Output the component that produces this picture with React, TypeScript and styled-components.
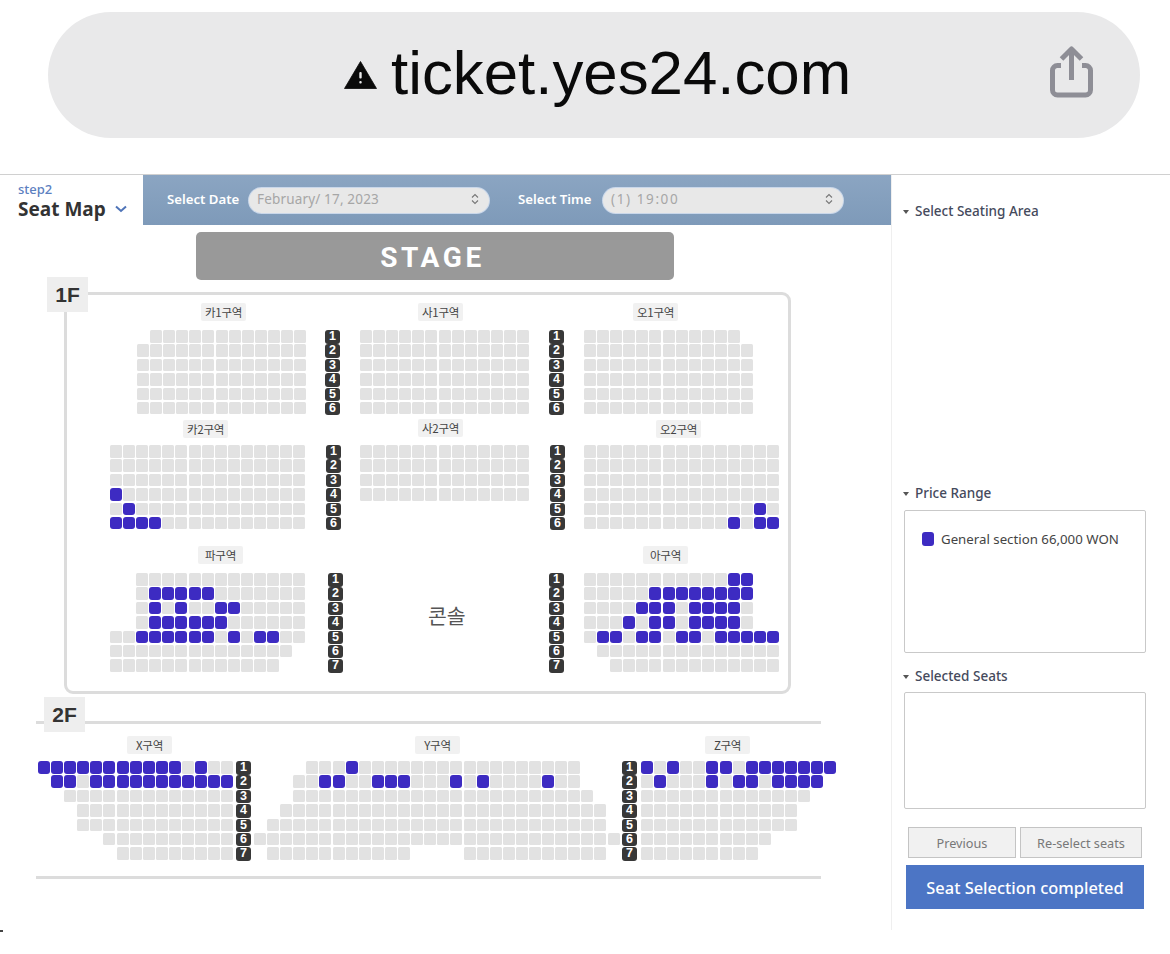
import React from "react";
import styled, { createGlobalStyle } from "styled-components";

const Global = createGlobalStyle`
  html, body { margin: 0; padding: 0; background: #fff; }
  body { font-family: "Noto Sans", "Noto Sans CJK KR", sans-serif; }
  #root { width: 1170px; height: 954px; overflow: hidden; }
`;

const Page = styled.div`
  width: 1170px;
  height: 954px;
  background: #fff;
  display: flex;
  flex-direction: column;
`;

/* ---------- Safari address bar ---------- */
const BrowserArea = styled.header`
  height: 175px;
  padding: 12px 30px 0 48px;
  box-sizing: border-box;
  border-bottom: 1px solid #d0d0d0;
  flex: none;
`;
const UrlPill = styled.div`
  height: 126px;
  border-radius: 63px;
  background: #e9e9ea;
  display: flex;
  align-items: center;
  padding: 0 47px 0 296px;
`;
const UrlText = styled.span`
  font-family: "Liberation Sans", Arial, sans-serif;
  font-size: 61.8px;
  line-height: 72px;
  color: #0a0a0a;
  margin-left: 14px;
  margin-top: -4px;
`;
const ShareWrap = styled.div`
  margin-left: auto;
  display: flex;
  margin-top: -8px;
`;

/* ---------- Body ---------- */
const Body = styled.div`
  display: flex;
  height: 755px;
  flex: none;
`;
const Main = styled.main`
  width: 891px;
  flex: none;
  display: flex;
  flex-direction: column;
`;
const TopBar = styled.div`
  display: flex;
  height: 50px;
  flex: none;
`;
const StepBox = styled.div`
  width: 143px;
  flex: none;
  box-sizing: border-box;
  padding: 6px 0 0 18px;
`;
const StepLabel = styled.div`
  font-size: 13px;
  line-height: 16px;
  color: #5c80bf;
  font-weight: 500;
`;
const StepTitle = styled.div`
  display: flex;
  align-items: center;
  gap: 9px;
  font-size: 19px;
  line-height: 24px;
  font-weight: 700;
  color: #333;
`;
const FilterBar = styled.div`
  flex: 1;
  display: flex;
  align-items: center;
  background: linear-gradient(#8ba5c2, #7e9ab9);
  padding: 0 0 0 24px;
`;
const FilterLabel = styled.span<{ $w: number }>`
  font-size: 13.2px;
  font-weight: 600;
  color: #fff;
  white-space: nowrap;
  width: ${(p) => p.$w}px;
  margin-bottom: 3px;
  flex: none;
`;
const FilterSelect = styled.div<{ $gap: number; $spacing: number }>`
  width: 240px;
  height: 25px;
  box-sizing: border-box;
  border-radius: 13px;
  background: #e8e8e8;
  box-shadow: 0 0 0 1px #c9d7ea;
  display: flex;
  align-items: center;
  justify-content: space-between;
  padding: 0 8px 2px 8px;
  margin-right: ${(p) => p.$gap}px;
  font-size: 13.5px;
  letter-spacing: ${(p) => p.$spacing}px;
  color: #a6a6a6;
  flex: none;
`;
const Canvas = styled.div`
  position: relative;
  flex: 1;
  display: flex;
  flex-direction: column;
`;
const Stage = styled.div`
  width: 478px;
  height: 48px;
  margin: 7px 0 0 196px;
  background: #999;
  border-radius: 5px;
  color: #fff;
  font-family: Roboto, "Liberation Sans", sans-serif;
  font-weight: 700;
  font-size: 28px;
  letter-spacing: 3.6px;
  display: flex;
  align-items: center;
  justify-content: center;
  padding: 2px 5px 0 0;
  box-sizing: border-box;
  flex: none;
`;
const Hall = styled.div`
  width: 727px;
  height: 402px;
  box-sizing: border-box;
  margin: 12px 0 0 64px;
  border: 3px solid #dcdcdc;
  border-radius: 9px;
  flex: none;
`;
const Rule = styled.div<{ $top: number }>`
  width: 785px;
  height: 3px;
  background: #dcdcdc;
  margin: ${(p) => p.$top}px 0 0 36px;
  flex: none;
`;
const FloorTag = styled.div<{ $x: number; $y: number }>`
  position: absolute;
  left: ${(p) => p.$x}px;
  top: ${(p) => p.$y}px;
  width: 41px;
  height: 35px;
  background: #eee;
  color: #333;
  font-family: "Liberation Sans", Arial, sans-serif;
  font-weight: 700;
  font-size: 21px;
  display: flex;
  align-items: center;
  justify-content: center;
`;
const ZoneTag = styled.div<{ $x: number; $y: number }>`
  position: absolute;
  left: ${(p) => p.$x}px;
  top: ${(p) => p.$y}px;
  width: 45px;
  height: 18px;
  background: #f1f1f1;
  border-radius: 2px;
  color: #444;
  font-family: "Noto Sans CJK KR", "Noto Sans", sans-serif;
  font-size: 11.5px;
  line-height: 18px;
  text-align: center;
  letter-spacing: -0.3px;
`;
const Console = styled.div`
  position: absolute;
  left: 428px;
  top: 376px;
  font-family: "Noto Sans CJK KR", sans-serif;
  font-size: 20.5px;
  line-height: 28px;
  color: #555;
`;
const SeatBlock = styled.div<{ $x: number; $y: number; $cols: number }>`
  position: absolute;
  left: ${(p) => p.$x}px;
  top: ${(p) => p.$y}px;
  display: grid;
  grid-template-columns: repeat(${(p) => p.$cols}, 13.1px);
  grid-auto-rows: 14.4px;
`;
const Seat = styled.div<{ $on?: boolean }>`
  width: 12px;
  height: 12.5px;
  border-radius: ${(p) => (p.$on ? "3px" : "1.5px")};
  background: ${(p) => (p.$on ? "#3d2bc2" : "#e2e2e2")};
`;
const SeatGap = styled.div``;
const RowNumbers = styled.div<{ $x: number; $y: number }>`
  position: absolute;
  left: ${(p) => p.$x}px;
  top: ${(p) => p.$y}px;
  display: grid;
  grid-auto-rows: 14.4px;
`;
const RowBadge = styled.div`
  width: 15px;
  height: 13.5px;
  border-radius: 3px;
  background: #383838;
  color: #fff;
  font-family: "Liberation Sans", Arial, sans-serif;
  font-weight: 700;
  font-size: 12.5px;
  line-height: 13.5px;
  text-align: center;
`;
const CornerMark = styled.div`
  position: absolute;
  left: 0;
  top: 705px;
  width: 3px;
  height: 2px;
  background: #444;
`;

/* ---------- Sidebar ---------- */
const Sidebar = styled.aside`
  flex: 1;
  box-sizing: border-box;
  border-left: 1px solid #efefef;
  padding: 27px 0 0 11px;
  display: flex;
  flex-direction: column;
`;
const Heading = styled.div<{ $top?: number }>`
  display: flex;
  align-items: center;
  gap: 6px;
  height: 18px;
  margin-top: ${(p) => p.$top ?? 0}px;
  font-size: 13.5px;
  font-weight: 500;
  color: #454a5c;
  white-space: nowrap;
  &::before {
    content: "";
    width: 0;
    height: 0;
    border-left: 3.5px solid transparent;
    border-right: 3.5px solid transparent;
    border-top: 4px solid #555;
    margin-top: 1px;
  }
`;
const InfoBox = styled.div<{ $h: number; $top: number }>`
  width: 242px;
  height: ${(p) => p.$h}px;
  margin: ${(p) => p.$top}px 0 0 1px;
  box-sizing: border-box;
  border: 1px solid #c9c9c9;
  border-radius: 2px;
  padding: 19px 0 0 17px;
  flex: none;
`;
const Legend = styled.div`
  display: flex;
  align-items: center;
  gap: 7px;
  font-size: 13.25px;
  line-height: 18px;
  color: #444;
  white-space: nowrap;
`;
const LegendSeat = styled.div`
  width: 12px;
  height: 14px;
  border-radius: 3px;
  background: #3d2bc2;
`;
const ButtonRow = styled.div`
  display: flex;
  gap: 4px;
  margin: 18px 0 0 5px;
`;
const GhostButton = styled.button<{ $w: number }>`
  width: ${(p) => p.$w}px;
  height: 31px;
  box-sizing: border-box;
  border: 1px solid #c4c4c4;
  background: #f1f1f1;
  color: #787878;
  font-family: inherit;
  font-size: 12.7px;
  padding: 0;
`;
const PrimaryButton = styled.button`
  width: 238px;
  height: 44px;
  margin: 7px 0 0 3px;
  border: none;
  background: #4c75c5;
  color: #fff;
  font-family: inherit;
  font-size: 16.4px;
  font-weight: 500;
  padding: 0;
`;

/* ---------- Data ---------- */
const ORIGIN_Y = 225;
type Row = [number, number, number[]?, [number, number]?];

const fullRows = (n: number, a: number, b: number): Row[] =>
  Array.from({ length: n }, () => [a, b] as Row);

const blocks: { x: number; y: number; cols: number; rows: Row[] }[] = [
  // 카1
  { x: 137, y: 330, cols: 13, rows: [[1, 12], ...fullRows(5, 0, 12)] },
  // 사1
  { x: 360, y: 330, cols: 13, rows: fullRows(6, 0, 12) },
  // 오1
  { x: 584, y: 330, cols: 13, rows: [[0, 11], ...fullRows(5, 0, 12)] },
  // 카2
  {
    x: 110, y: 445, cols: 15,
    rows: [[0, 14], [0, 14], [0, 14], [0, 14, [0]], [0, 14, [1]], [0, 14, [0, 1, 2, 3]]],
  },
  // 사2
  { x: 360, y: 445, cols: 13, rows: fullRows(4, 0, 12) },
  // 오2
  {
    x: 584, y: 445, cols: 15,
    rows: [[0, 14], [0, 14], [0, 14], [0, 14], [0, 14, [13]], [0, 14, [11, 13, 14]]],
  },
  // 파
  {
    x: 110, y: 573, cols: 15,
    rows: [
      [2, 14],
      [2, 14, [3, 4, 5, 6, 7]],
      [2, 14, [3, 5, 8, 9]],
      [2, 14, [3, 4, 5, 6, 7, 8]],
      [0, 14, [2, 3, 4, 5, 6, 7, 9, 11, 12]],
      [0, 13],
      [0, 12],
    ],
  },
  // 아
  {
    x: 584, y: 573, cols: 15,
    rows: [
      [0, 12, [11, 12]],
      [0, 12, [5, 6, 7, 8, 9, 10, 11, 12]],
      [0, 12, [4, 5, 6, 8, 9, 10, 11]],
      [0, 12, [3, 5, 6, 8, 9, 10, 11]],
      [0, 14, [1, 2, 4, 5, 7, 8, 10, 11, 12, 13, 14]],
      [1, 14],
      [2, 14],
    ],
  },
  // X
  {
    x: 38, y: 761, cols: 15,
    rows: [
      [0, 14, [0, 1, 2, 3, 4, 5, 6, 7, 8, 9, 10, 12]],
      [1, 14, [1, 2, 4, 5, 6, 7, 8, 9, 10, 11, 12, 13, 14]],
      [2, 14],
      [3, 14],
      [3, 14],
      [5, 14],
      [6, 14],
    ],
  },
  // Y
  {
    x: 254, y: 761, cols: 28,
    rows: [
      [4, 24, [7]],
      [3, 24, [5, 6, 9, 10, 11, 15, 17, 22]],
      [3, 25],
      [2, 26],
      [1, 26],
      [0, 27],
      [1, 26, [], [12, 15]],
    ],
  },
  // Z
  {
    x: 641, y: 761, cols: 15,
    rows: [
      [0, 14, [0, 2, 5, 6, 8, 9, 10, 11, 12, 13, 14]],
      [0, 13, [1, 5, 7, 8, 10, 11, 12, 13]],
      [0, 12],
      [0, 11],
      [0, 11],
      [0, 9],
      [0, 8],
    ],
  },
];

const rowColumns: { x: number; y: number; n: number }[] = [
  { x: 325, y: 330, n: 6 },
  { x: 549, y: 330, n: 6 },
  { x: 326, y: 445, n: 6 },
  { x: 550, y: 445, n: 6 },
  { x: 328, y: 573, n: 7 },
  { x: 549, y: 573, n: 7 },
  { x: 236, y: 761, n: 7 },
  { x: 622, y: 761, n: 7 },
];

const zones: { t: string; x: number; y: number }[] = [
  { t: "카1구역", x: 201, y: 303 },
  { t: "사1구역", x: 418, y: 303 },
  { t: "오1구역", x: 633, y: 303 },
  { t: "카2구역", x: 183, y: 420 },
  { t: "사2구역", x: 418, y: 419 },
  { t: "오2구역", x: 656, y: 420 },
  { t: "파구역", x: 198, y: 546 },
  { t: "아구역", x: 643, y: 546 },
  { t: "X구역", x: 127, y: 736 },
  { t: "Y구역", x: 415, y: 736 },
  { t: "Z구역", x: 705, y: 736 },
];

/* ---------- Icons ---------- */
const WarningIcon = () => (
  <svg width="33" height="28" viewBox="0 0 33 28" style={{ flex: "none" }}>
    <path d="M16.5 0.5 L32.5 27.5 H0.5 Z" fill="#0a0a0a" stroke="#0a0a0a" strokeWidth="0.8" strokeLinejoin="round" />
    <rect x="15.3" y="11" width="2.4" height="6.5" rx="1" fill="#e9e9ea" />
    <rect x="15.3" y="20" width="2.4" height="2.6" rx="1" fill="#e9e9ea" />
  </svg>
);
const ShareIcon = () => (
  <svg width="43" height="53" viewBox="0 0 43 53" fill="none" stroke="#8e8e96" strokeWidth="5" strokeLinejoin="round">
    <path d="M11 20.5 H7.5 a5 5 0 0 0 -5 5 V45 a5 5 0 0 0 5 5 H35.5 a5 5 0 0 0 5 -5 V25.5 a5 5 0 0 0 -5 -5 H32" />
    <path d="M21.5 35 V4" />
    <path d="M11.5 14 L21.5 4 L31.5 14" />
  </svg>
);
const Chevron = () => (
  <svg width="12" height="8" viewBox="0 0 12 8" fill="none" stroke="#4f74b8" strokeWidth="2">
    <path d="M1 1.5 L6 6 L11 1.5" />
  </svg>
);
const UpDown = () => (
  <svg width="12" height="14" viewBox="0 0 12 14" fill="none" stroke="#777" strokeWidth="1.1">
    <path d="M3 5.5 L6 2.5 L9 5.5" />
    <path d="M3 8.5 L6 11.5 L9 8.5" />
  </svg>
);

export default function App() {
  return (
    <Page>
      <Global />
      <BrowserArea>
        <UrlPill>
          <WarningIcon />
          <UrlText>ticket.yes24.com</UrlText>
          <ShareWrap>
            <ShareIcon />
          </ShareWrap>
        </UrlPill>
      </BrowserArea>
      <Body>
        <Main>
          <TopBar>
            <StepBox>
              <StepLabel>step2</StepLabel>
              <StepTitle>
                Seat Map <Chevron />
              </StepTitle>
            </StepBox>
            <FilterBar>
              <FilterLabel $w={82}>Select Date</FilterLabel>
              <FilterSelect $gap={29} $spacing={0.17}>
                February/ 17, 2023 <UpDown />
              </FilterSelect>
              <FilterLabel $w={85}>Select Time</FilterLabel>
              <FilterSelect $gap={0} $spacing={1.6}>
                (1) 19:00 <UpDown />
              </FilterSelect>
            </FilterBar>
          </TopBar>
          <Canvas>
            <Stage>STAGE</Stage>
            <Hall />
            <Rule $top={27} />
            <Rule $top={152} />
            <FloorTag $x={47} $y={52}>1F</FloorTag>
            <FloorTag $x={44} $y={472}>2F</FloorTag>
            {zones.map((z) => (
              <ZoneTag key={z.t} $x={z.x} $y={z.y - ORIGIN_Y}>{z.t}</ZoneTag>
            ))}
            <Console>콘솔</Console>
            {rowColumns.map((c) => (
              <RowNumbers key={`${c.x}-${c.y}`} $x={c.x} $y={c.y - ORIGIN_Y}>
                {Array.from({ length: c.n }, (_, i) => (
                  <RowBadge key={i}>{i + 1}</RowBadge>
                ))}
              </RowNumbers>
            ))}
            {blocks.map((b) => (
              <SeatBlock key={`${b.x}-${b.y}`} $x={b.x} $y={b.y - ORIGIN_Y} $cols={b.cols}>
                {b.rows.flatMap(([from, to, sel = [], gap], r) =>
                  Array.from({ length: b.cols }, (_, c) => {
                    const inGap = gap && c >= gap[0] && c <= gap[1];
                    return c < from || c > to || inGap ? (
                      <SeatGap key={`${r}-${c}`} />
                    ) : (
                      <Seat key={`${r}-${c}`} $on={sel.includes(c)} />
                    );
                  })
                )}
              </SeatBlock>
            ))}
            <CornerMark />
          </Canvas>
        </Main>
        <Sidebar>
          <Heading>Select Seating Area</Heading>
          <Heading $top={264}>Price Range</Heading>
          <InfoBox $h={143} $top={8}>
            <Legend>
              <LegendSeat />
              General section 66,000 WON
            </Legend>
          </InfoBox>
          <Heading $top={14}>Selected Seats</Heading>
          <InfoBox $h={117} $top={7} />
          <ButtonRow>
            <GhostButton $w={108}>Previous</GhostButton>
            <GhostButton $w={122}>Re-select seats</GhostButton>
          </ButtonRow>
          <PrimaryButton>Seat Selection completed</PrimaryButton>
        </Sidebar>
      </Body>
    </Page>
  );
}
